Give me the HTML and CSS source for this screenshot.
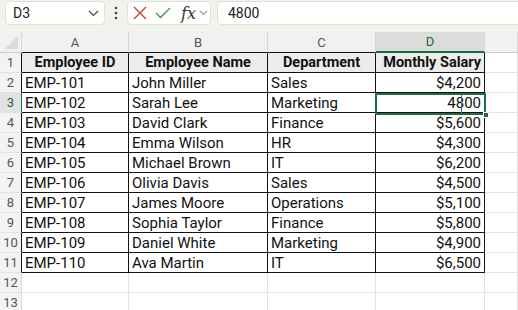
FILE: index.html
```html
<!DOCTYPE html>
<html lang="en">
<head>
    <meta charset="UTF-8">
    <title>Employees - Sheet1</title>
    <link rel="stylesheet" href="styles.css">
</head>
<body>
    <div class="formula-bar">
        <div class="name-box">
            <span>D3</span>
            <svg width="11" height="7" viewBox="0 0 11 7"><path d="M1 1l4.5 4.5L10 1" fill="none" stroke="#444" stroke-width="1.2"/></svg>
        </div>
        <div class="dots">
            <svg width="4" height="14" viewBox="0 0 4 14"><circle cx="2" cy="2" r="1.3" fill="#444"/><circle cx="2" cy="7" r="1.3" fill="#444"/><circle cx="2" cy="12" r="1.3" fill="#444"/></svg>
        </div>
        <div class="func-box">
            <svg width="14" height="14" viewBox="0 0 14 14"><path d="M1 1l12 12M13 1L1 13" fill="none" stroke="#d13438" stroke-width="1.3"/></svg>
            <svg width="16" height="12" viewBox="0 0 16 12"><path d="M1 6l4.5 4.5L15 1" fill="none" stroke="#3a9a3a" stroke-width="1.3"/></svg>
            <span class="fx">fx</span>
            <svg width="9" height="6" viewBox="0 0 9 6"><path d="M1 1l3.5 3.5L8 1" fill="none" stroke="#999" stroke-width="1.1"/></svg>
        </div>
        <div class="formula-input">4800</div>
    </div>

    <div class="sheet">
        <table class="grid">
            <colgroup>
                <col class="c-row"><col class="c-a"><col class="c-b"><col class="c-c"><col class="c-d"><col>
            </colgroup>
            <thead>
                <tr class="col-heads">
                    <th class="corner"><span class="tri"></span></th>
                    <th class="edge">A</th><th class="edge">B</th><th class="edge">C</th><th class="edge active">D</th><th></th>
                </tr>
            </thead>
            <tbody id="rows"></tbody>
        </table>
        <div class="selection"><span class="handle"></span></div>
        <div class="caret"></div>
    </div>

    <script>
        const rows = [
            ['Employee ID', 'Employee Name', 'Department', 'Monthly Salary'],
            ['EMP-101', 'John Miller', 'Sales', '$4,200'],
            ['EMP-102', 'Sarah Lee', 'Marketing', '4800'],
            ['EMP-103', 'David Clark', 'Finance', '$5,600'],
            ['EMP-104', 'Emma Wilson', 'HR', '$4,300'],
            ['EMP-105', 'Michael Brown', 'IT', '$6,200'],
            ['EMP-106', 'Olivia Davis', 'Sales', '$4,500'],
            ['EMP-107', 'James Moore', 'Operations', '$5,100'],
            ['EMP-108', 'Sophia Taylor', 'Finance', '$5,800'],
            ['EMP-109', 'Daniel White', 'Marketing', '$4,900'],
            ['EMP-110', 'Ava Martin', 'IT', '$6,500']
        ];

        let html = '';
        for (let i = 0; i < 13; i++) {
            const r = rows[i];
            const cls = i === 2 ? ' active' : '';
            html += '<tr>';
            html += `<th class="row-num${r ? ' edge' : ''}${cls}">${i + 1}</th>`;
            if (r) {
                const head = i === 0 ? ' head' : '';
                html += `<td class="t${head}">${r[0]}</td>`;
                html += `<td class="t${head}">${r[1]}</td>`;
                html += `<td class="t${head}">${r[2]}</td>`;
                html += `<td class="t num${head}">${r[3]}</td>`;
            } else {
                html += '<td></td><td></td><td></td><td></td>';
            }
            html += '<td></td></tr>';
        }
        document.getElementById('rows').innerHTML = html;
    </script>
</body>
</html>
```

FILE: styles.css
```css
* {
    margin: 0;
    padding: 0;
    box-sizing: border-box;
}

body {
    background: #ffffff;
    font-family: Roboto, "Liberation Sans", sans-serif;
    overflow: hidden;
}

.formula-bar {
    background: #eff3ec;
    height: 32px;
    display: flex;
    align-items: flex-start;
    padding: 1px 0 0 5px;
}

.name-box {
    width: 100px;
    height: 24px;
    background: #fff;
    border: 1px solid #dde2da;
    border-radius: 4px;
    display: flex;
    align-items: center;
    justify-content: space-between;
    padding: 0 5px 0 7px;
    font-size: 14px;
    color: #222;
}

.dots {
    width: 22px;
    height: 24px;
    display: flex;
    align-items: center;
    justify-content: center;
}

.func-box {
    width: 84px;
    height: 24px;
    background: #fff;
    border: 1px solid #dde2da;
    border-radius: 4px;
    display: flex;
    align-items: center;
    padding: 0 0 0 5px;
    gap: 8px;
}

.func-box .fx {
    font-family: "DejaVu Serif", serif;
    font-style: italic;
    font-size: 16px;
    color: #333;
    margin-left: 2px;
    margin-right: -5px;
}

.formula-input {
    flex: 1;
    height: 24px;
    margin-left: 6px;
    background: #fff;
    border: 1px solid #dde2da;
    border-right: none;
    border-radius: 4px 0 0 4px;
    display: flex;
    align-items: center;
    padding-left: 10px;
    font-size: 14px;
    color: #222;
}

.sheet {
    position: relative;
}

.grid {
    border-collapse: separate;
    border-spacing: 0;
    table-layout: fixed;
    width: 100%;
}

.c-row { width: 22px; }
.c-a { width: 107px; }
.c-b { width: 139px; }
.c-c { width: 108px; }
.c-d { width: 109px; }

.grid th,
.grid td {
    height: 20px;
    border-right: 1px solid #e1e1e1;
    border-bottom: 1px solid #e1e1e1;
    font-size: 15px;
    white-space: nowrap;
    overflow: hidden;
}

.col-heads th {
    height: 21px;
    background: #f1f1f1;
    font-weight: normal;
    font-size: 13px;
    color: #555;
    border-right-color: #d8d8d8;
    border-bottom-color: #c9c9c9;
}

.col-heads th.edge {
    border-bottom-color: #111;
}

.col-heads th.active {
    background: #dcdcdc;
    color: #1c6b3c;
    border-bottom: 2px solid #1c6b3c;
}

.corner {
    position: relative;
}

.tri {
    position: absolute;
    right: 3px;
    bottom: 3px;
    border-style: solid;
    border-width: 0 0 13px 13px;
    border-color: transparent transparent #dadada transparent;
}

.row-num {
    background: #f3f3f3;
    font-weight: normal;
    font-size: 13px !important;
    color: #555;
    text-align: center;
    border-right-color: #d8d8d8 !important;
}

.row-num.edge {
    border-right-color: #111 !important;
}

.row-num.active {
    background: #e2e2e2;
    color: #1c6b3c;
    border-right: 1px solid #1c6b3c !important;
}

.grid td {
    color: #111;
    padding: 0 3px;
}

.grid td.t {
    border-right-color: #111;
    border-bottom-color: #111;
}

.grid td.head {
    background: #ececec;
    font-weight: bold;
    font-size: 14.5px;
    text-align: center;
}

.grid td.num {
    text-align: right;
}

.selection {
    position: absolute;
    left: 375px;
    top: 61px;
    width: 111px;
    height: 22px;
    border: 2px solid #1f6e42;
}

.handle {
    position: absolute;
    right: -5px;
    bottom: -5px;
    width: 6px;
    height: 6px;
    background: #1f6e42;
    border: 1px solid #fff;
}

.caret {
    position: absolute;
    left: 461px;
    top: 63px;
    width: 1px;
    height: 18px;
    background: #666;
}
```
